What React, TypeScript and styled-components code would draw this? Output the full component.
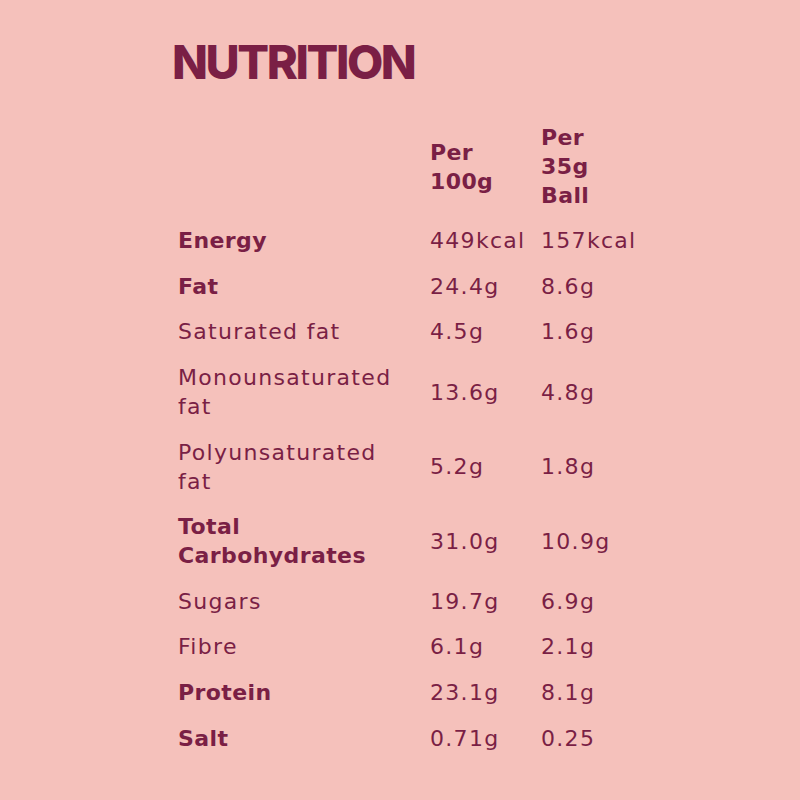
import React from "react";
import styled, { createGlobalStyle } from "styled-components";

const Global = createGlobalStyle`
  html, body { margin: 0; padding: 0; background: #f5c1bb; }
  body { font-family: "DejaVu Sans", Inter, sans-serif; color: #7a1f45; }
`;

const Page = styled.main`
  min-height: 800px;
  background: #f5c1bb;
  display: flex;
  justify-content: center;
  padding-top: 32px;
  box-sizing: border-box;
`;

const Panel = styled.section`
  width: 456px;
  display: flex;
  flex-direction: column;
  gap: 23px;
`;

const Title = styled.h2`
  margin: 0;
  font-family: Inter, Roboto, sans-serif;
  font-weight: 800;
  font-size: 47px;
  line-height: 60px;
  color: #7a1f45;
  letter-spacing: -2.4px;
`;

const Table = styled.table`
  border-collapse: collapse;
  table-layout: fixed;
  width: 468px;
`;

const Col = styled.col<{ $w: number }>`
  width: ${(p) => p.$w}px;
`;

const Cell = styled.td<{ $bold?: boolean }>`
  padding: 8.3px 6px;
  font-family: "DejaVu Sans", sans-serif;
  font-size: 22px;
  line-height: 29px;
  font-weight: ${(p) => (p.$bold ? 700 : 400)};
  letter-spacing: ${(p) => (p.$bold ? "0.4px" : "1.3px")};
  vertical-align: middle;
  text-align: left;
  color: #7a1f45;
`;

const Head = styled.th`
  padding: 8px 6px;
  font-family: "DejaVu Sans", sans-serif;
  font-size: 22px;
  line-height: 29px;
  font-weight: 700;
  letter-spacing: 0.4px;
  vertical-align: middle;
  text-align: left;
  color: #7a1f45;
`;

type Row = { label: string; bold?: boolean; a: string; b: string };

const rows: Row[] = [
  { label: "Energy", bold: true, a: "449kcal", b: "157kcal" },
  { label: "Fat", bold: true, a: "24.4g", b: "8.6g" },
  { label: "Saturated fat", a: "4.5g", b: "1.6g" },
  { label: "Monounsaturated fat", a: "13.6g", b: "4.8g" },
  { label: "Polyunsaturated fat", a: "5.2g", b: "1.8g" },
  { label: "Total Carbohydrates", bold: true, a: "31.0g", b: "10.9g" },
  { label: "Sugars", a: "19.7g", b: "6.9g" },
  { label: "Fibre", a: "6.1g", b: "2.1g" },
  { label: "Protein", bold: true, a: "23.1g", b: "8.1g" },
  { label: "Salt", bold: true, a: "0.71g", b: "0.25" },
];

export default function App() {
  return (
    <>
      <Global />
      <Page>
        <Panel>
          <Title>NUTRITION</Title>
          <Table>
            <colgroup>
              <Col $w={252} />
              <Col $w={111} />
              <Col $w={105} />
            </colgroup>
            <thead>
              <tr>
                <Head />
                <Head>
                  Per
                  <br />
                  100g
                </Head>
                <Head>
                  Per
                  <br />
                  35g
                  <br />
                  Ball
                </Head>
              </tr>
            </thead>
            <tbody>
              {rows.map((r) => (
                <tr key={r.label}>
                  <Cell $bold={r.bold}>{r.label}</Cell>
                  <Cell>{r.a}</Cell>
                  <Cell>{r.b}</Cell>
                </tr>
              ))}
            </tbody>
          </Table>
        </Panel>
      </Page>
    </>
  );
}
